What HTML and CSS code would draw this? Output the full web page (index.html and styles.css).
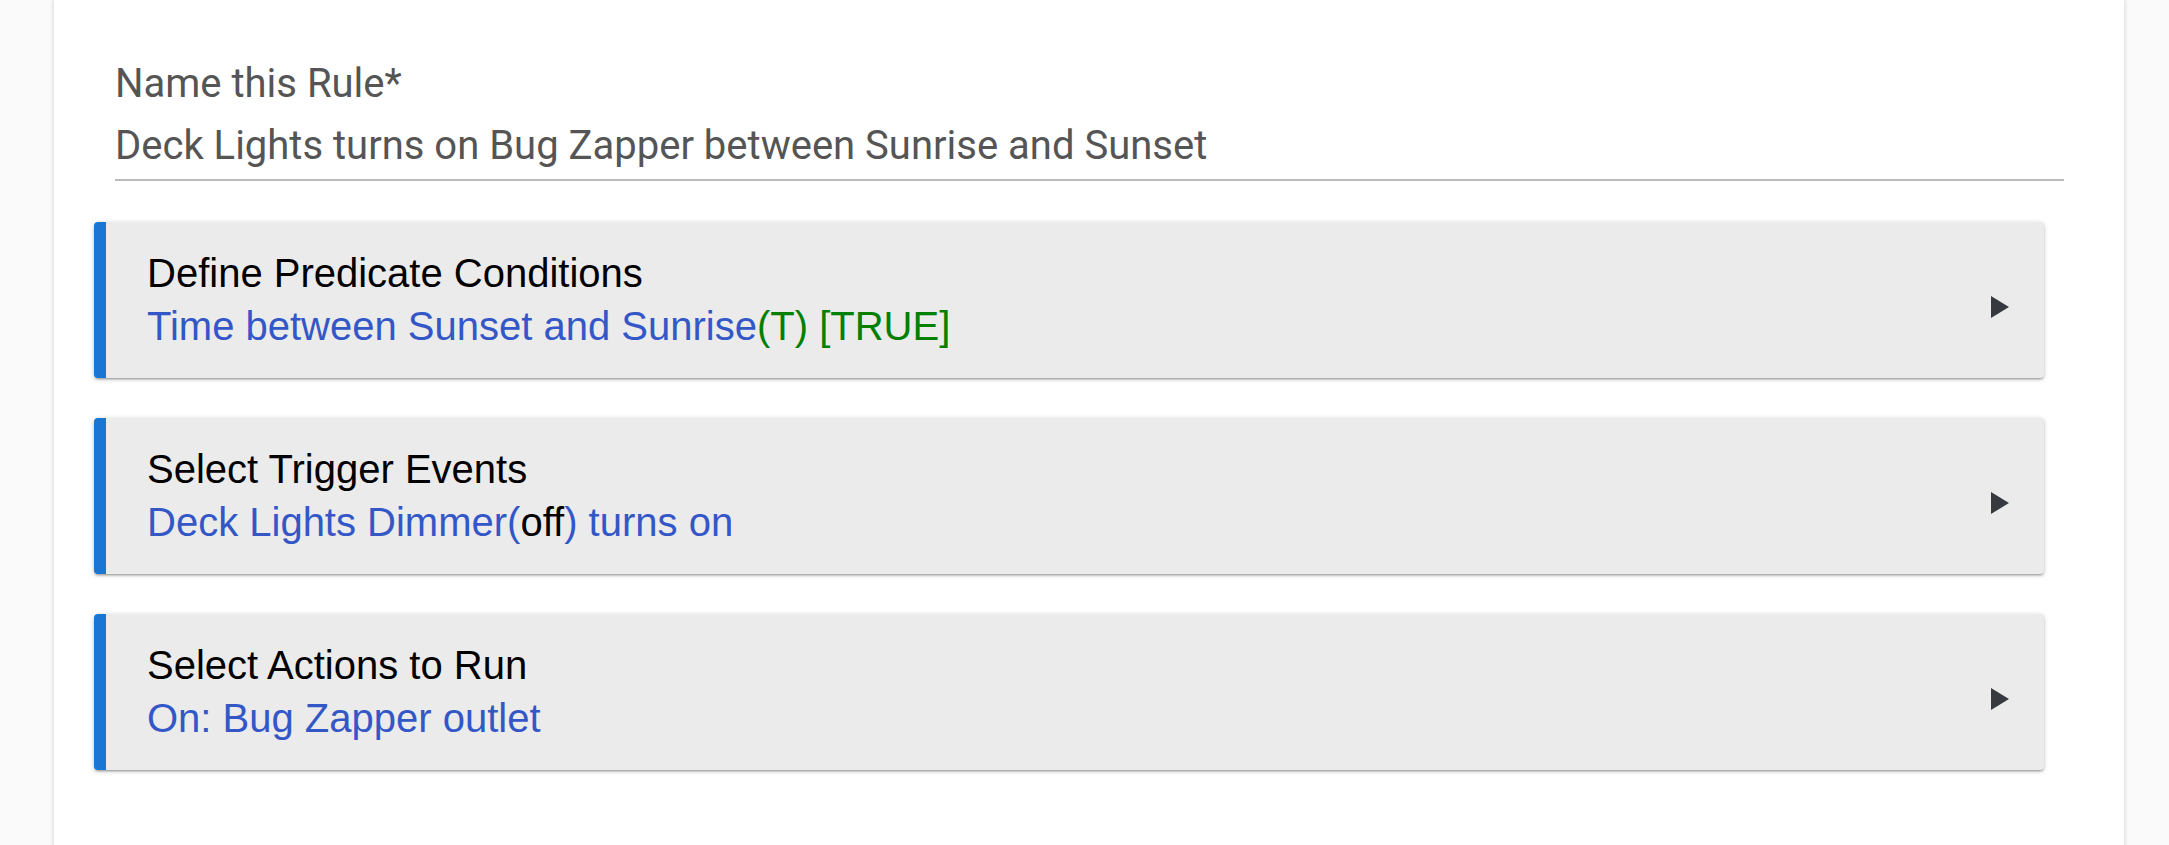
FILE: index.html
```html
<!DOCTYPE html>
<html lang="en">
<head>
    <meta charset="UTF-8">
    <meta name="viewport" content="width=device-width, initial-scale=1.0">
    <title>Rule Machine</title>
    <link rel="stylesheet" href="styles.css">
</head>
<body>
    <div class="panel">
        <div class="field">
            <label class="field-label">Name this Rule*</label>
            <div class="field-input">Deck Lights turns on Bug Zapper between Sunrise and Sunset</div>
        </div>

        <div class="sections">
            <div class="section">
                <div class="section-text">
                    <div class="section-title">Define Predicate Conditions</div>
                    <div class="section-sub">Time between Sunset and Sunrise<span class="ok">(T) [TRUE]</span></div>
                </div>
                <svg class="arrow" width="18" height="22" viewBox="0 0 18 22"><polygon points="0,0 18,11 0,22"/></svg>
            </div>

            <div class="section">
                <div class="section-text">
                    <div class="section-title">Select Trigger Events</div>
                    <div class="section-sub">Deck Lights Dimmer(<span class="state">off</span>) turns on</div>
                </div>
                <svg class="arrow" width="18" height="22" viewBox="0 0 18 22"><polygon points="0,0 18,11 0,22"/></svg>
            </div>

            <div class="section">
                <div class="section-text">
                    <div class="section-title">Select Actions to Run</div>
                    <div class="section-sub">On: Bug Zapper outlet</div>
                </div>
                <svg class="arrow" width="18" height="22" viewBox="0 0 18 22"><polygon points="0,0 18,11 0,22"/></svg>
            </div>
        </div>
    </div>
</body>
</html>
```
FILE: styles.css
```css
body {
    margin: 0;
    background-color: #fafafa;
    overflow: hidden;
}

.panel {
    margin-left: 54px;
    width: 2070px;
    min-height: 900px;
    box-sizing: border-box;
    padding: 60px 60px 0 40px;
    background-color: #fff;
    box-shadow: 0 0 5px rgba(0, 0, 0, 0.18);
}

.field {
    margin-left: 21px;
    font-family: 'Roboto', sans-serif;
    font-size: 40px;
    color: #555;
}

.field-label {
    display: block;
    line-height: 47px;
}

.field-input {
    margin-top: 15px;
    line-height: 47px;
    padding-bottom: 10px;
    border-bottom: 2px solid #bbb;
}

.sections {
    margin-top: 41px;
    margin-right: 20px;
    display: flex;
    flex-direction: column;
    gap: 40px;
}

.section {
    display: flex;
    align-items: center;
    height: 156px;
    box-sizing: border-box;
    padding: 0 35px 0 41px;
    background-color: #ebebeb;
    border-left: 12px solid #1976d2;
    border-radius: 4px;
    box-shadow: 0 2px 2px 0 rgba(0, 0, 0, 0.14), 0 3px 1px -2px rgba(0, 0, 0, 0.12), 0 1px 5px 0 rgba(0, 0, 0, 0.2);
    font-family: 'Liberation Sans', Arial, sans-serif;
    font-size: 40px;
}

.section-text {
    flex: 1;
}

.section-title {
    color: #000;
    line-height: 53px;
}

.section-sub {
    color: #3457c8;
    line-height: 53px;
}

.ok {
    color: #008000;
}

.state {
    color: #000;
}

.arrow {
    fill: #36393d;
    margin-top: 14px;
}
```
